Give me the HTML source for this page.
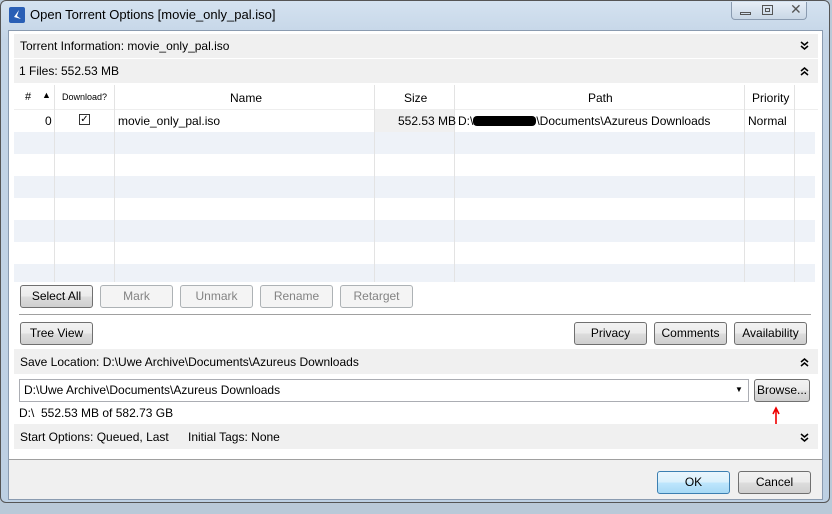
<!DOCTYPE html><html><head><style>
*{box-sizing:border-box;margin:0;padding:0}
body{width:832px;height:514px;overflow:hidden;background:#b9c9d8;font-family:"Liberation Sans",sans-serif;font-size:12px;color:#000;position:relative}
.a{position:absolute}
.frame{left:0;top:0;width:830px;height:503px;background:linear-gradient(#d4e2f0,#c3d4e6 40px,#bdd0e3);border:1px solid #555;border-radius:6px}
.inner{left:8px;top:30px;width:815px;height:470px;background:#fff;border:1px solid #8a9bb0}
.gray{background:#f0f0f0}
.btn{position:absolute;height:23px;border:1px solid #707070;border-radius:3px;background:linear-gradient(#f2f2f2,#ebebeb 50%,#dddddd 51%,#cfcfcf);text-align:center;line-height:21px;font-size:12px}
.dis{border-color:#adb2b5;background:#f4f4f4;color:#838383}
.vl{position:absolute;top:85px;width:1px;height:197px;background:#e3e3e3}
.txt{position:absolute;white-space:nowrap}
svg.ch{position:absolute;width:9px;height:9px}
</style></head><body>
<div class="a frame"></div>
<div class="a" style="left:9px;top:7px;width:16px;height:16px;background:#2a5fb5;border-radius:2px"></div>
<svg class="a" style="left:9px;top:7px" width="16" height="16"><path d="M10 3 L5 10 L12 12 L8 9 Z" fill="#fff"/></svg>
<div class="txt" style="left:30px;top:7px;font-size:13px">Open Torrent Options [movie_only_pal.iso]</div>
<div class="a" style="left:731px;top:2px;width:76px;height:18px;border:1px solid #8a9bb0;border-top:none;border-radius:0 0 4px 4px;background:linear-gradient(#e6eef7,#c9d7e6)"></div>
<div class="a" style="left:740px;top:12px;width:11px;height:3px;border:1px solid #555"></div>
<div class="a" style="left:762px;top:5px;width:11px;height:10px;border:1px solid #555"></div><div class="a" style="left:765px;top:8px;width:5px;height:4px;border:1px solid #555"></div>
<div class="txt" style="left:790px;top:1px;color:#555;font-size:14px">✕</div>
<div class="a inner"></div>
<div class="a gray" style="left:14px;top:34px;width:804px;height:24px"></div>
<div class="txt" style="left:20px;top:39px">Torrent Information: movie_only_pal.iso</div>
<svg class="ch" style="left:800px;top:41px" viewBox="0 0 9 9"><path d="M1 1 L4.5 4 L8 1 M1 5 L4.5 8 L8 5" stroke="#000" stroke-width="1.5" fill="none"/></svg>
<div class="a gray" style="left:14px;top:59px;width:804px;height:24px"></div>
<div class="txt" style="left:19px;top:64px">1 Files: 552.53 MB</div>
<svg class="ch" style="left:800px;top:67px" viewBox="0 0 9 9"><path d="M1 4 L4.5 1 L8 4 M1 8 L4.5 5 L8 8" stroke="#000" stroke-width="1.5" fill="none"/></svg>
<div class="a" style="left:14px;top:84px;width:804px;height:26px;background:#fff;border-bottom:1px solid #eee"></div>
<div class="a" style="left:14px;top:132px;width:801px;height:22px;background:#eef2f8"></div>
<div class="a" style="left:14px;top:176px;width:801px;height:22px;background:#eef2f8"></div>
<div class="a" style="left:14px;top:220px;width:801px;height:22px;background:#eef2f8"></div>
<div class="a" style="left:14px;top:264px;width:801px;height:18px;background:#eef2f8"></div>
<div class="a" style="left:375px;top:110px;width:80px;height:22px;background:#f0f0f0"></div>
<div class="vl" style="left:54px"></div><div class="vl" style="left:114px"></div><div class="vl" style="left:374px"></div><div class="vl" style="left:454px"></div><div class="vl" style="left:744px"></div><div class="vl" style="left:794px"></div>
<div class="txt" style="left:25px;top:91px;font-size:11px">#</div><div class="txt" style="left:42px;top:90px;font-size:9px">▲</div>
<div class="txt" style="left:62px;top:92px;font-size:9px">Download?</div>
<div class="txt" style="left:230px;top:91px">Name</div>
<div class="txt" style="left:404px;top:91px">Size</div>
<div class="txt" style="left:588px;top:91px">Path</div>
<div class="txt" style="left:752px;top:91px">Priority</div>
<div class="txt" style="left:45px;top:114px">0</div>
<div class="a" style="left:79px;top:114px;width:11px;height:11px;border:1px solid #333;font-size:10px;line-height:9px;text-align:center">✓</div>
<div class="txt" style="left:118px;top:114px">movie_only_pal.iso</div>
<div class="txt" style="left:398px;top:114px">552.53 MB</div>
<div class="txt" style="left:458px;top:114px">D:\<span style="display:inline-block;width:63px;height:10px;background:#000;border-radius:4px;vertical-align:-1px"></span>\Documents\Azureus Downloads</div>
<div class="txt" style="left:748px;top:114px">Normal</div>
<div class="btn" style="left:20px;top:285px;width:73px">Select All</div>
<div class="btn dis" style="left:100px;top:285px;width:73px">Mark</div>
<div class="btn dis" style="left:180px;top:285px;width:73px">Unmark</div>
<div class="btn dis" style="left:260px;top:285px;width:73px">Rename</div>
<div class="btn dis" style="left:340px;top:285px;width:73px">Retarget</div>
<div class="a" style="left:19px;top:314px;width:792px;height:1px;background:#a0a0a0"></div>
<div class="btn" style="left:20px;top:322px;width:73px">Tree View</div>
<div class="btn" style="left:574px;top:322px;width:73px">Privacy</div>
<div class="btn" style="left:654px;top:322px;width:73px">Comments</div>
<div class="btn" style="left:734px;top:322px;width:73px">Availability</div>
<div class="a gray" style="left:14px;top:349px;width:804px;height:25px"></div>
<div class="txt" style="left:20px;top:355px">Save Location: D:\Uwe Archive\Documents\Azureus Downloads</div>
<svg class="ch" style="left:800px;top:358px" viewBox="0 0 9 9"><path d="M1 4 L4.5 1 L8 4 M1 8 L4.5 5 L8 8" stroke="#000" stroke-width="1.5" fill="none"/></svg>
<div class="a" style="left:19px;top:379px;width:730px;height:23px;border:1px solid #abadb3;background:#fff"></div>
<div class="txt" style="left:24px;top:383px">D:\Uwe Archive\Documents\Azureus Downloads</div>
<div class="txt" style="left:735px;top:385px;font-size:8px">▼</div>
<div class="btn" style="left:754px;top:379px;width:56px">Browse...</div>
<svg class="a" style="left:770px;top:406px" width="12" height="30"><path d="M6 28 L6 3 M3 8 L6 2 L9 8" stroke="#e00" stroke-width="1.6" fill="none"/></svg>
<div class="txt" style="left:19px;top:406px">D:\&nbsp; 552.53 MB of 582.73 GB</div>
<div class="a gray" style="left:14px;top:424px;width:804px;height:25px"></div>
<div class="txt" style="left:20px;top:430px">Start Options: Queued, Last</div>
<div class="txt" style="left:188px;top:430px">Initial Tags: None</div>
<svg class="ch" style="left:800px;top:433px" viewBox="0 0 9 9"><path d="M1 1 L4.5 4 L8 1 M1 5 L4.5 8 L8 5" stroke="#000" stroke-width="1.5" fill="none"/></svg>
<div class="a gray" style="left:9px;top:459px;width:813px;height:40px;border-top:1px solid #a0a0a0"></div>
<div class="btn" style="left:657px;top:471px;width:73px;border-color:#3c7fb1;background:linear-gradient(#eaf6fd,#d9f0fc 50%,#bee6fd 51%,#a7d9f5)">OK</div>
<div class="btn" style="left:738px;top:471px;width:73px">Cancel</div>
</body></html>
